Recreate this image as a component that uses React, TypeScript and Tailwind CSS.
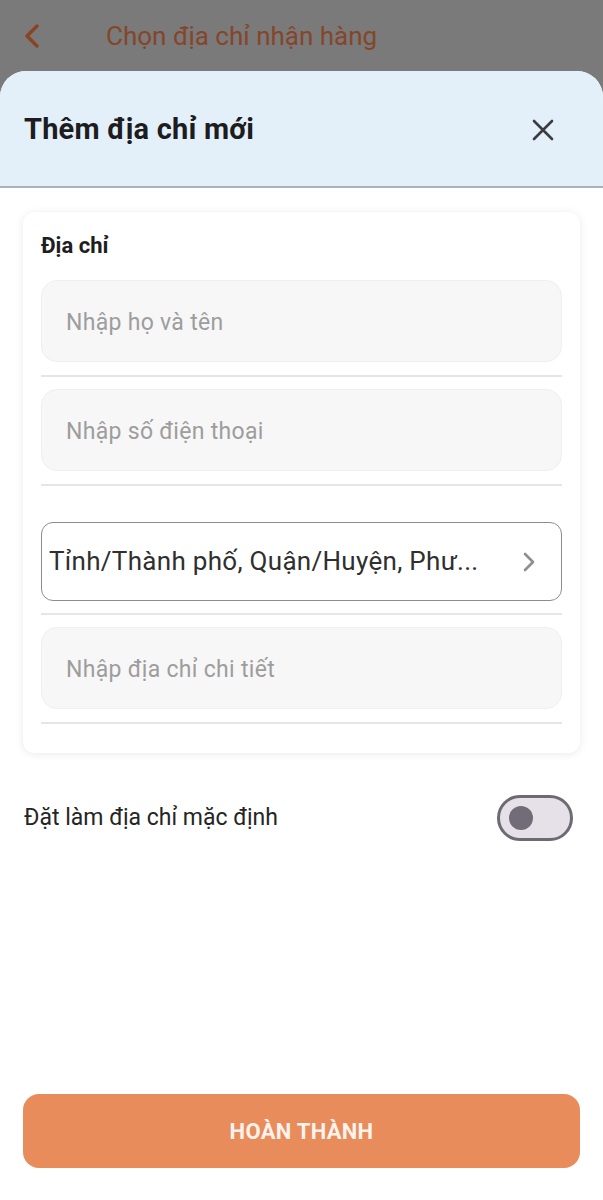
import React from "react";

function Field({ placeholder }: { placeholder: string }) {
  return (
    <div className="flex flex-col">
      <div className="h-[82px] rounded-[16px] bg-[#f7f7f7] border border-[#efefef] flex items-center px-[24px]">
        <span className="text-[23px] text-[#9d9d9d] tracking-[0.3px] mt-[5px]">{placeholder}</span>
      </div>
      <div className="h-[2px] bg-[#e6e6e6] mt-[13px]" />
    </div>
  );
}

export default function App() {
  return (
    <div
      className="w-full h-[1200px] bg-[#7a7a7a] flex flex-col overflow-hidden"
      style={{ fontFamily: "Roboto, 'Noto Sans', sans-serif" }}
    >
      {/* dimmed page behind */}
      <div className="h-[71px] flex items-center shrink-0">
        <svg className="ml-[22px]" width="20" height="26" viewBox="0 0 20 26" fill="none">
          <path d="M15 3 L5 13 L15 23" stroke="#8a4424" strokeWidth="3.5" strokeLinecap="round" strokeLinejoin="round" />
        </svg>
        <span className="ml-[64px] text-[26px] text-[#84462a] mt-[1px]">Chọn địa chỉ nhận hàng</span>
      </div>

      {/* sheet */}
      <div className="flex-1 bg-white rounded-t-[26px] flex flex-col overflow-hidden">
        <div className="h-[117px] bg-[#e3f0fa] border-b-2 border-[#a9b3bb] flex items-center justify-between px-[24px] shrink-0">
          <span className="text-[29px] font-bold text-[#1d1d1f] tracking-[0.2px] mt-[3px]">Thêm địa chỉ mới</span>
          <svg className="mr-[25px] mt-[2px]" width="22" height="22" viewBox="0 0 22 22" fill="none">
            <path d="M2 2 L20 20 M20 2 L2 20" stroke="#3b3b40" strokeWidth="2.6" strokeLinecap="round" />
          </svg>
        </div>

        <div className="flex-1 flex flex-col px-[23px] pt-[24px] pb-[32px]">
          <div className="rounded-[12px] bg-white shadow-[0_1px_8px_rgba(0,0,0,0.09)] px-[18px] pt-[20px] pb-[29px] flex flex-col">
            <span className="text-[22px] font-bold text-[#1e1e1e] leading-[28px]">Địa chỉ</span>
            <div className="mt-[20px] flex flex-col gap-[12px]">
              <Field placeholder="Nhập họ và tên" />
              <Field placeholder="Nhập số điện thoại" />
              <div className="flex flex-col mt-[24px]">
                <div className="h-[79px] rounded-[12px] border-[1.5px] border-[#8c8c8c] flex items-center justify-between pl-[7px] pr-[26px]">
                  <span className="text-[26px] text-[#2f2f2f] tracking-[0.3px]">Tỉnh/Thành phố, Quận/Huyện, Phư...</span>
                  <svg width="12" height="20" viewBox="0 0 12 20" fill="none">
                    <path d="M2 2 L10 10 L2 18" stroke="#8e8e8e" strokeWidth="2.6" strokeLinecap="round" strokeLinejoin="round" />
                  </svg>
                </div>
                <div className="h-[2px] bg-[#e6e6e6] mt-[12px]" />
              </div>
              <Field placeholder="Nhập địa chỉ chi tiết" />
            </div>
          </div>

          <div className="mt-[42px] flex items-center justify-between pr-[7px]">
            <span className="text-[23px] text-[#252525] pl-[1px]">Đặt làm địa chỉ mặc định</span>
            <div className="w-[76px] h-[46px] rounded-full border-[3px] border-[#6e6a72] bg-[#e6e1e8] flex items-center pl-[9px]">
              <div className="w-[24px] h-[24px] rounded-full bg-[#716c77]" />
            </div>
          </div>

          <div className="flex-1" />

          <button className="h-[74px] rounded-[16px] bg-[#e88c5c] flex items-center justify-center">
            <span className="text-[22px] font-bold text-[#fdf3ec] tracking-[0.3px]">HOÀN THÀNH</span>
          </button>
        </div>
      </div>
    </div>
  );
}
